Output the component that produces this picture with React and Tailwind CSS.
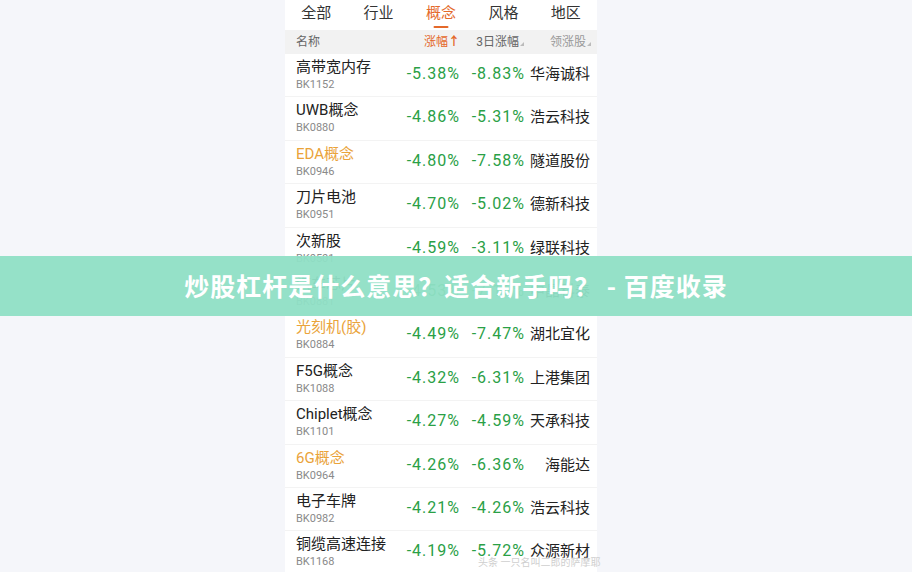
import React from 'react';

const tabs = ['全部', '行业', '概念', '风格', '地区'];

const rows = [
  { name: '高带宽内存', code: 'BK1152', p1: '-5.38%', p2: '-8.83%', lead: '华海诚科' },
  { name: 'UWB概念', code: 'BK0880', p1: '-4.86%', p2: '-5.31%', lead: '浩云科技' },
  { name: 'EDA概念', code: 'BK0946', p1: '-4.80%', p2: '-7.58%', lead: '隧道股份', hot: true },
  { name: '刀片电池', code: 'BK0951', p1: '-4.70%', p2: '-5.02%', lead: '德新科技' },
  { name: '次新股', code: 'BK0501', p1: '-4.59%', p2: '-3.11%', lead: '绿联科技' },
  { name: '汽车芯片', code: 'BK0881', p1: '-4.53%', p2: '-7.16%', lead: '中晶科泰' },
  { name: '光刻机(胶)', code: 'BK0884', p1: '-4.49%', p2: '-7.47%', lead: '湖北宜化', hot: true },
  { name: 'F5G概念', code: 'BK1088', p1: '-4.32%', p2: '-6.31%', lead: '上港集团' },
  { name: 'Chiplet概念', code: 'BK1101', p1: '-4.27%', p2: '-4.59%', lead: '天承科技' },
  { name: '6G概念', code: 'BK0964', p1: '-4.26%', p2: '-6.36%', lead: '海能达', hot: true },
  { name: '电子车牌', code: 'BK0982', p1: '-4.21%', p2: '-4.26%', lead: '浩云科技' },
  { name: '铜缆高速连接', code: 'BK1168', p1: '-4.19%', p2: '-5.72%', lead: '众源新材' },
];

const Corner = () => (
  <span className="inline-block w-0 h-0 ml-[1px] border-l-[4px] border-l-transparent border-b-[4px] border-b-[#bbbbbb] align-baseline" />
);

export default function App() {
  return (
    <div
      className="relative w-[912px] h-[572px] overflow-hidden bg-[#f5f6fa]"
      style={{ fontFamily: 'Roboto, "Noto Sans CJK SC", sans-serif' }}
    >
      <div className="ml-[285px] w-[312px] h-full bg-white">
        {/* Tabs */}
        <div className="grid grid-cols-5 h-[30px]">
          {tabs.map((t) => (
            <div key={t} className="relative flex justify-center">
              <span
                className={`text-[15px] leading-[27px] ${t === '概念' ? 'text-[#e4692a]' : 'text-[#333333]'}`}
              >
                {t}
              </span>
              {t === '概念' && (
                <span className="absolute top-[26px] left-1/2 -translate-x-1/2 w-[15px] h-[2px] rounded bg-[#e4692a]" />
              )}
            </div>
          ))}
        </div>

        {/* Column header */}
        <div className="flex items-center h-[24px] bg-[#f2f2f2] text-[12px] pr-[6px]">
          <div className="flex-1 pl-[11px] text-[#666666]">名称</div>
          <div className="w-[70px] text-right text-[#e4692a] pr-[1px]">
            涨幅<span className="font-bold">↑</span>
          </div>
          <div className="w-[63px] text-right text-[#666666]">
            3日涨幅<Corner />
          </div>
          <div className="w-[67px] text-right text-[#999999]">
            领涨股<Corner />
          </div>
        </div>

        {/* Rows */}
        {rows.map((r) => (
          <div key={r.code} className="flex h-[43.4px] border-b border-[#f3f3f3] pr-[7px]">
            <div className="flex-1 pl-[11px] pt-[4px]">
              <div className={`text-[15px] leading-[19px] ${r.hot ? 'text-[#eaa33a]' : 'text-[#222222]'}`}>
                {r.name}
              </div>
              <div className="text-[11px] leading-[14px] mt-[1px] text-[#8a8a8a]">{r.code}</div>
            </div>
            <div className="w-[70px] text-right text-[16px] leading-[18px] pt-[11px] tracking-[1px] text-[#2aa046]">{r.p1}</div>
            <div className="w-[65px] text-right text-[16px] leading-[18px] pt-[11px] tracking-[1px] text-[#2aa046]">{r.p2}</div>
            <div className="w-[65px] text-right text-[15px] leading-[18px] pt-[11px] text-[#222222]">{r.lead}</div>
          </div>
        ))}
      </div>

      {/* Watermark */}
      <div className="absolute left-[478px] top-[556px] text-[10px] leading-[14px] text-[#cfcfcf]">
        头条 一只名叫二郎的萨摩耶
      </div>

      {/* Banner overlay */}
      <div className="absolute left-0 right-0 top-[256px] h-[60px] bg-[#8fdfc5]/95 flex items-center justify-center">
        <span
          className="text-white text-[25px] font-bold tracking-[1px]"
          style={{ fontFamily: '"Noto Sans CJK SC", sans-serif' }}
        >
          炒股杠杆是什么意思？适合新手吗？ - 百度收录
        </span>
      </div>
    </div>
  );
}
